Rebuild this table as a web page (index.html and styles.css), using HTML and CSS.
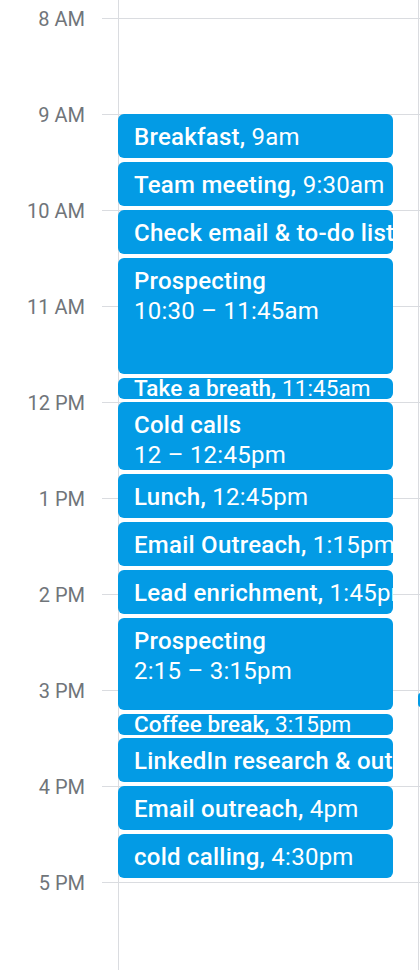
FILE: index.html
```html
<!DOCTYPE html>
<html lang="en">
<head>
<meta charset="utf-8">
<title>Day schedule</title>
<link rel="stylesheet" href="styles.css">
</head>
<body>
<div class="cal">
  <div class="grid">
    <div class="hour"><span class="label">8 AM</span><span class="rule"></span></div>
    <div class="hour"><span class="label">9 AM</span><span class="rule"></span></div>
    <div class="hour"><span class="label">10 AM</span><span class="rule"></span></div>
    <div class="hour"><span class="label">11 AM</span><span class="rule"></span></div>
    <div class="hour"><span class="label">12 PM</span><span class="rule"></span></div>
    <div class="hour"><span class="label">1 PM</span><span class="rule"></span></div>
    <div class="hour"><span class="label">2 PM</span><span class="rule"></span></div>
    <div class="hour"><span class="label">3 PM</span><span class="rule"></span></div>
    <div class="hour"><span class="label">4 PM</span><span class="rule"></span></div>
    <div class="hour"><span class="label">5 PM</span><span class="rule"></span></div>
  </div>
  <div class="events">
    <div class="event d30"><span class="title">Breakfast,</span> 9am</div>
    <div class="event d30"><span class="title">Team meeting,</span> 9:30am</div>
    <div class="event d30"><span class="title">Check email &amp; to-do list,</span> 10am</div>
    <div class="event d75"><div class="title">Prospecting</div><div>10:30 – 11:45am</div></div>
    <div class="event d15"><span class="title">Take a breath,</span> 11:45am</div>
    <div class="event d45"><div class="title">Cold calls</div><div>12 – 12:45pm</div></div>
    <div class="event d30"><span class="title">Lunch,</span> 12:45pm</div>
    <div class="event d30"><span class="title">Email Outreach,</span> 1:15pm</div>
    <div class="event d30"><span class="title">Lead enrichment,</span> 1:45pm</div>
    <div class="event d60"><div class="title">Prospecting</div><div>2:15 – 3:15pm</div></div>
    <div class="event d15"><span class="title">Coffee break,</span> 3:15pm</div>
    <div class="event d30"><span class="title">LinkedIn research &amp; outreach,</span> 3:30pm</div>
    <div class="event d30"><span class="title">Email outreach,</span> 4pm</div>
    <div class="event d30"><span class="title">cold calling,</span> 4:30pm</div>
  </div>
  <div class="peek"></div>
</div>
</body>
</html>
```

FILE: styles.css
```css
html, body {
  margin: 0;
  padding: 0;
  background: #ffffff;
}

body {
  font-family: Roboto, "Noto Sans", Arial, sans-serif;
}

.cal {
  position: relative;
  height: 970px;
  overflow: hidden;
}

.cal::before,
.cal::after {
  content: "";
  position: absolute;
  top: 0;
  bottom: 0;
  width: 1px;
  background: #dadce0;
}

.cal::before {
  left: 118px;
}

.cal::after {
  left: 418px;
}

.grid {
  padding-top: 18px;
}

.hour {
  display: flex;
  height: 96px;
}

.label {
  width: 85px;
  height: 24px;
  margin-top: -11px;
  line-height: 24px;
  font-size: 20px;
  color: #70757a;
  text-align: right;
  white-space: nowrap;
}

.rule {
  flex: 1;
  margin-left: 17px;
  border-top: 1px solid #dadce0;
}

.events {
  position: absolute;
  top: 114px;
  left: 118px;
  width: 275px;
  display: flex;
  flex-direction: column;
  z-index: 1;
}

.event {
  box-sizing: border-box;
  background: #039be5;
  color: #ffffff;
  border-radius: 6px;
  padding: 8px 0 0 16px;
  font-size: 24px;
  line-height: 30px;
  letter-spacing: 0.25px;
  white-space: nowrap;
  overflow: hidden;
  margin-bottom: 4px;
}

.title {
  font-weight: 500;
}

.d15 {
  height: 21px;
  margin-bottom: 3px;
  padding-top: 0;
  font-size: 22.5px;
  line-height: 20px;
  letter-spacing: 0.1px;
}

.d30 {
  height: 44px;
}

.d45 {
  height: 68px;
}

.d60 {
  height: 92px;
}

.d75 {
  height: 116px;
}

.peek {
  position: absolute;
  top: 693px;
  left: 418px;
  width: 4px;
  height: 14px;
  border-radius: 3px 0 0 3px;
  background: #039be5;
  z-index: 1;
}
```
